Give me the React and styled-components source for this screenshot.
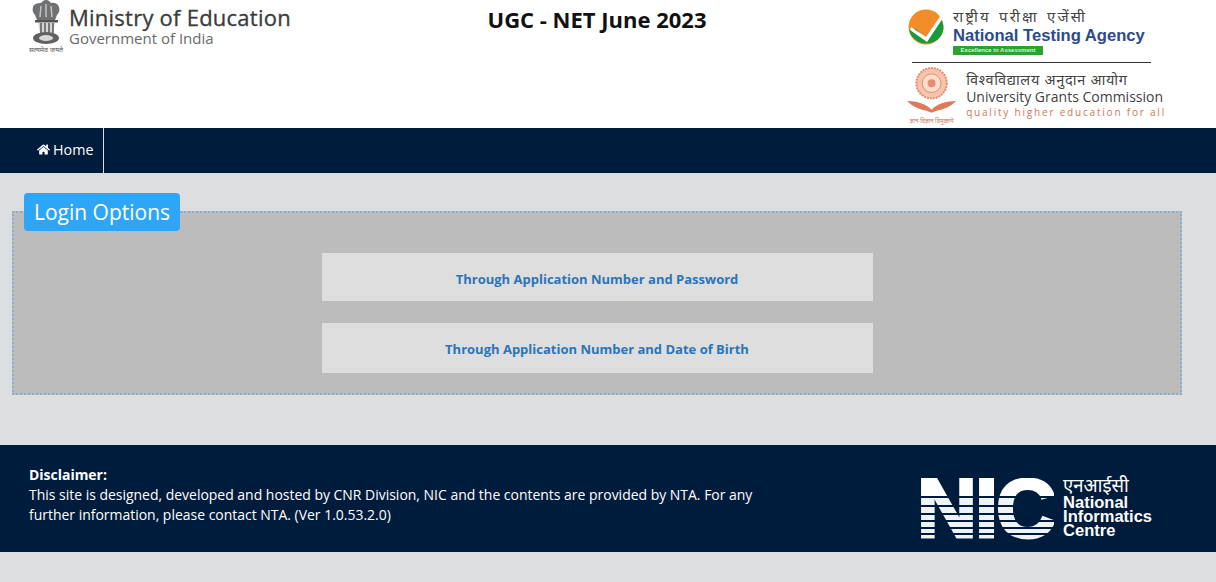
import React from 'react';
import styled, { createGlobalStyle } from 'styled-components';
import { FaHome } from 'react-icons/fa';

const GlobalStyle = createGlobalStyle`
  html, body {
    margin: 0;
    padding: 0;
    background: #dcdedf;
    font-family: "Open Sans", "Liberation Sans", sans-serif;
  }
`;

const Page = styled.div`
  width: 1216px;
  height: 582px;
  overflow: hidden;
  display: flex;
  flex-direction: column;
`;

const Header = styled.header`
  height: 128px;
  box-sizing: border-box;
  background: #fff;
  padding: 0 50px 0 28px;
  display: grid;
  grid-template-columns: 1fr auto 1fr;
`;

const Ministry = styled.div`
  display: flex;
  align-items: flex-start;
  gap: 3px;
`;

const MinistryText = styled.div`
  padding-top: 5px;
`;

const MinistryName = styled.div`
  font-size: 22px;
  line-height: 25px;
  letter-spacing: 0.24px;
  color: #3a3a3c;
  -webkit-text-stroke: 0.3px #3a3a3c;
`;

const MinistrySub = styled.div`
  font-size: 15px;
  line-height: 16px;
  color: #6a6a6a;
`;

const Title = styled.h1`
  margin: 4px 0 0;
  font-size: 22px;
  line-height: 30px;
  font-weight: 700;
  color: #111;
`;

const Agencies = styled.div`
  justify-self: end;
  width: 260px;
  display: flex;
  flex-direction: column;
`;

const Nta = styled.div`
  display: flex;
  gap: 7px;
  height: 62px;
  padding: 8px 0 0 2px;
  box-sizing: border-box;
`;

const Rule = styled.div`
  height: 1px;
  width: 239px;
  margin-left: 6px;
  background: #333;
`;

const AgencyText = styled.div`
  display: flex;
  flex-direction: column;
  padding-top: ${(p) => p.$top || 0}px;
`;

const Hindi = styled.div`
  font-family: "Noto Sans", "Liberation Sans", sans-serif;
  font-size: ${(p) => p.$size}px;
  line-height: 17px;
  letter-spacing: ${(p) => p.$spacing || 0}px;
  word-spacing: ${(p) => p.$words || 0}px;
  color: #444;
  white-space: nowrap;
`;

const NtaName = styled.div`
  font-family: "Liberation Sans", sans-serif;
  font-weight: 700;
  font-size: 16.6px;
  line-height: 21px;
  color: #2c4a8c;
  white-space: nowrap;
`;

const Tagline = styled.div`
  width: 90px;
  height: 9px;
  background: #2fa12f;
  color: #d8f0d8;
  font-family: "Liberation Sans", sans-serif;
  font-size: 6px;
  font-weight: 700;
  line-height: 9px;
  text-align: center;
  white-space: nowrap;
`;

const Ugc = styled.div`
  display: flex;
  gap: 7px;
  padding-top: 2px;
`;

const UgcName = styled.div`
  font-size: 14px;
  line-height: 17px;
  color: #3f3f46;
  white-space: nowrap;
`;

const UgcMotto = styled.div`
  font-size: 10px;
  line-height: 15px;
  letter-spacing: 1.8px;
  color: #c9775a;
  white-space: nowrap;
`;

const Nav = styled.nav`
  height: 45px;
  background: #001c3d;
  display: flex;
`;

const HomeLink = styled.a`
  display: flex;
  align-items: center;
  gap: 3px;
  padding: 0 10px 2px 37px;
  border-right: 1px solid #d8dde3;
  color: #fff;
  font-size: 14.3px;
  text-decoration: none;
`;

const Main = styled.main`
  flex: none;
  height: 272px;
  padding: 38px 34px 0 12px;
  box-sizing: border-box;
  position: relative;
`;

const Options = styled.section`
  height: 184px;
  box-sizing: border-box;
  background: #bcbcbc;
  border: 2px dotted #86add6;
  display: flex;
  flex-direction: column;
  align-items: center;
  gap: 22px;
  padding-top: 40px;
`;

const Legend = styled.div`
  position: absolute;
  left: 24px;
  top: 20px;
  width: 156px;
  height: 38px;
  box-sizing: border-box;
  background: #2ea6f7;
  border-radius: 4px;
  color: #fff;
  font-size: 21px;
  line-height: 38px;
  text-align: center;
`;

const OptionLink = styled.a`
  width: 551px;
  height: ${(p) => p.$height}px;
  background: #dedede;
  color: #2a75b8;
  font-size: 13px;
  font-weight: 700;
  display: flex;
  align-items: center;
  justify-content: center;
  padding-top: ${(p) => p.$pad}px;
  box-sizing: border-box;
  text-decoration: none;
`;

const Footer = styled.footer`
  height: 107px;
  box-sizing: border-box;
  background: #001c3d;
  color: #fff;
  padding: 20px 64px 0 29px;
  display: flex;
  justify-content: space-between;
`;

const Disclaimer = styled.div`
  width: 740px;
  font-size: 13.96px;
  line-height: 20px;
`;

const DisclaimerTitle = styled.div`
  font-weight: 700;
`;

const NicLogo = styled.div`
  display: flex;
  gap: 9px;
  align-items: flex-start;
  padding-top: 13px;
`;

const NicMark = styled.div`
  font-family: "Liberation Sans", sans-serif;
  font-weight: 700;
  font-size: 83px;
  line-height: 62px;
  height: 62px;
  letter-spacing: -2px;
  color: transparent;
  -webkit-text-stroke: 3px transparent;
  background: linear-gradient(
    #fff 0 18px,
    #001c3d 18px 20px,
    #eef3f8 20px 27px,
    #001c3d 27px 29px,
    #eef3f8 29px 35px,
    #001c3d 35px 37px,
    #eef3f8 37px 42px,
    #001c3d 42px 44px,
    #eef3f8 44px 49px,
    #001c3d 49px 51px,
    #eef3f8 51px 55px,
    #001c3d 55px 57px,
    #eef3f8 57px 62px
  );
  -webkit-background-clip: text;
  background-clip: text;
`;

const NicText = styled.div`
  display: flex;
  flex-direction: column;
  margin-top: -3px;
`;

const NicHindi = styled.div`
  font-family: "Noto Sans", "Liberation Sans", sans-serif;
  font-size: 18.5px;
  line-height: 20px;
  color: #fff;
`;

const NicName = styled.div`
  font-family: "Liberation Sans", sans-serif;
  font-size: 16.5px;
  font-weight: 700;
  line-height: 14px;
  color: #fff;
`;

const Emblem = () => (
  <svg width="38" height="54" viewBox="0 0 38 54">
    <path d="M18 0c3 0 4 2 5 3 4-1 7 1 8 4s0 6-2 8l-2 5H9l-2-5C5 13 4 10 5 7s4-4 8-4c1-1 2-3 5-3z" fill="#6f7173" />
    <path d="M13 6l-1 11M18 4v13M23 6l1 11" stroke="#c4c4c4" strokeWidth="1.5" />
    <rect x="7" y="20" width="23" height="2.5" fill="#555" />
    <path d="M10 23h17l-2 10H12z" fill="#d6d6d6" />
    <path d="M13 23v10M17 23v10M21 23v10M25 23v10" stroke="#5f6163" strokeWidth="1.6" />
    <ellipse cx="18" cy="38" rx="13" ry="6" fill="#5f6163" />
    <ellipse cx="18" cy="38" rx="7" ry="3" fill="#d8d8d8" />
    <text x="18" y="52" fontSize="7" fontFamily="Noto Sans, sans-serif" textAnchor="middle" fill="#555">सत्यमेव जयते</text>
  </svg>
);

const NtaMark = () => (
  <svg width="38" height="40" viewBox="0 0 38 40">
    <circle cx="18" cy="19" r="17.5" fill="#f28c28" />
    <path d="M1 21a17.5 17.5 0 0 0 34.5 0c0-4-1-7-2-9L18 30 8 21z" fill="#159a3c" />
    <path d="M3 19l15 10L33 7l2 3-16 24L2 22z" fill="#fff" />
  </svg>
);

const UgcMark = () => (
  <svg width="54" height="60" viewBox="0 0 54 60">
    <circle cx="26" cy="18" r="15.5" fill="#f6c4ad" stroke="#df8d6d" strokeWidth="2" strokeDasharray="2 1" />
    <circle cx="26" cy="18" r="9.5" fill="#fbdccd" stroke="#df8d6d" />
    <circle cx="26" cy="18" r="4" fill="#e09070" />
    <path d="M1 36c10 0 20 3 25 9 5-6 15-9 25-9-6 6-14 9-20 10l-5 2-5-2C15 45 7 42 1 36z" fill="#e0795a" />
    <text x="26" y="58" fontSize="6" fontFamily="Noto Sans, sans-serif" textAnchor="middle" fill="#c9775a">ज्ञान-विज्ञान विमुक्तये</text>
  </svg>
);

const App = () => (
  <Page>
    <GlobalStyle />
    <Header>
      <Ministry>
        <Emblem />
        <MinistryText>
          <MinistryName>Ministry of Education</MinistryName>
          <MinistrySub>Government of India</MinistrySub>
        </MinistryText>
      </Ministry>
      <Title>UGC - NET June 2023</Title>
      <Agencies>
        <Nta>
          <NtaMark />
          <AgencyText>
            <Hindi $size={15} $spacing={2.2} $words={2}>राष्ट्रीय परीक्षा एजेंसी</Hindi>
            <NtaName>National Testing Agency</NtaName>
            <Tagline>Excellence in Assessment</Tagline>
          </AgencyText>
        </Nta>
        <Rule />
        <Ugc>
          <UgcMark />
          <AgencyText $top={6}>
            <Hindi $size={14.5} $spacing={0.7}>विश्वविद्यालय अनुदान आयोग</Hindi>
            <UgcName>University Grants Commission</UgcName>
            <UgcMotto>quality higher education for all</UgcMotto>
          </AgencyText>
        </Ugc>
      </Agencies>
    </Header>
    <Nav>
      <HomeLink href="#"><FaHome size={13} />Home</HomeLink>
    </Nav>
    <Main>
      <Legend>Login Options</Legend>
      <Options>
        <OptionLink href="#" $height={48} $pad={4}>Through Application Number and Password</OptionLink>
        <OptionLink href="#" $height={50} $pad={2}>Through Application Number and Date of Birth</OptionLink>
      </Options>
    </Main>
    <Footer>
      <Disclaimer>
        <DisclaimerTitle>Disclaimer:</DisclaimerTitle>
        This site is designed, developed and hosted by CNR Division, NIC and the contents are provided by NTA. For any further information, please contact NTA. (Ver 1.0.53.2.0)
      </Disclaimer>
      <NicLogo>
        <NicMark>NIC</NicMark>
        <NicText>
          <NicHindi>एनआईसी</NicHindi>
          <NicName>National<br />Informatics<br />Centre</NicName>
        </NicText>
      </NicLogo>
    </Footer>
  </Page>
);

export default App;
